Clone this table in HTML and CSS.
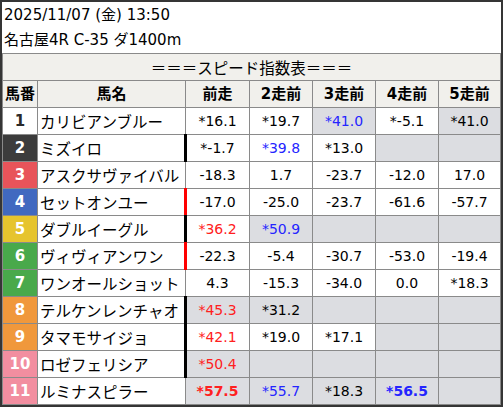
FILE: index.html
```html
<!DOCTYPE html>
<html lang="ja">
<head>
<meta charset="utf-8">
<title>スピード指数表</title>
<link rel="stylesheet" href="styles.css">
</head>
<body>
<div class="frame">
  <div class="info">
    <div>2025/11/07 (金) 13:50</div>
    <div>名古屋4R C-35 ダ1400m</div>
  </div>
  <div class="sheet" role="table">
    <div class="title">＝＝＝スピード指数表＝＝＝</div>
    <div class="row" role="row">
      <div class="c h">馬番</div><div class="c h">馬名</div><div class="c h">前走</div><div class="c h">2走前</div><div class="c h">3走前</div><div class="c h">4走前</div><div class="c h">5走前</div>
    </div>
    <div class="row" role="row">
      <div class="c num f1">1</div><div class="c name">カリビアンブルー</div>
      <div class="c">*16.1</div><div class="c">*19.7</div><div class="c g b">*41.0</div><div class="c">*-5.1</div><div class="c g">*41.0</div>
    </div>
    <div class="row" role="row">
      <div class="c num f2">2</div><div class="c name">ミズイロ</div>
      <div class="c lb">*-1.7</div><div class="c b">*39.8</div><div class="c">*13.0</div><div class="c g"></div><div class="c g"></div>
    </div>
    <div class="row" role="row">
      <div class="c num f3">3</div><div class="c name">アスクサヴァイバル</div>
      <div class="c">-18.3</div><div class="c">1.7</div><div class="c">-23.7</div><div class="c">-12.0</div><div class="c">17.0</div>
    </div>
    <div class="row" role="row">
      <div class="c num f4">4</div><div class="c name">セットオンユー</div>
      <div class="c lr">-17.0</div><div class="c">-25.0</div><div class="c">-23.7</div><div class="c">-61.6</div><div class="c">-57.7</div>
    </div>
    <div class="row" role="row">
      <div class="c num f5">5</div><div class="c name">ダブルイーグル</div>
      <div class="c lb r">*36.2</div><div class="c g b">*50.9</div><div class="c g"></div><div class="c g"></div><div class="c g"></div>
    </div>
    <div class="row" role="row">
      <div class="c num f6">6</div><div class="c name">ヴィヴィアンワン</div>
      <div class="c lr">-22.3</div><div class="c">-5.4</div><div class="c">-30.7</div><div class="c">-53.0</div><div class="c">-19.4</div>
    </div>
    <div class="row" role="row">
      <div class="c num f6">7</div><div class="c name">ワンオールショット</div>
      <div class="c">4.3</div><div class="c">-15.3</div><div class="c">-34.0</div><div class="c">0.0</div><div class="c">*18.3</div>
    </div>
    <div class="row" role="row">
      <div class="c num f8">8</div><div class="c name">テルケンレンチャオ</div>
      <div class="c lb g r">*45.3</div><div class="c g">*31.2</div><div class="c g"></div><div class="c g"></div><div class="c g"></div>
    </div>
    <div class="row" role="row">
      <div class="c num f8">9</div><div class="c name">タマモサイジョ</div>
      <div class="c lb r">*42.1</div><div class="c">*19.0</div><div class="c">*17.1</div><div class="c g"></div><div class="c g"></div>
    </div>
    <div class="row" role="row">
      <div class="c num f10">10</div><div class="c name">ロゼフェリシア</div>
      <div class="c lb g r">*50.4</div><div class="c g"></div><div class="c g"></div><div class="c g"></div><div class="c g"></div>
    </div>
    <div class="row" role="row">
      <div class="c num f10">11</div><div class="c name">ルミナスピラー</div>
      <div class="c g r bold">*57.5</div><div class="c g b">*55.7</div><div class="c g">*18.3</div><div class="c g b bold">*56.5</div><div class="c g"></div>
    </div>
  </div>
</div>
</body>
</html>
```

FILE: styles.css
```css
* { box-sizing: border-box; margin: 0; padding: 0; }
html, body { width: 503px; height: 407px; overflow: hidden; }
body {
  font-family: "DejaVu Sans", "Noto Sans CJK JP", sans-serif;
  font-size: 14px;
  color: #000;
  background: #fff;
}
.frame {
  width: 503px;
  height: 407px;
  border: 2px solid #353535;
  display: flex;
  flex-direction: column;
}
.info {
  height: 51px;
  padding: 1px 0 0 2px;
  line-height: 25px;
  font-size: 15px;
}
.sheet {
  display: grid;
  grid-template-columns: 34px 147px 63px 62px 62px 62px 61px;
  grid-auto-rows: 26px;
  gap: 1px;
  padding: 1px;
  background: #8a8a8a;
}
.row { display: contents; }
.title {
  grid-column: 1 / -1;
  background: #f1f0ec;
  text-align: center;
  font-family: "Noto Sans CJK JP", sans-serif;
  font-size: 15.5px;
  line-height: 26px;
}
.c {
  position: relative;
  background: #fff;
  line-height: 26px;
  text-align: center;
  white-space: nowrap;
}
.h {
  background: #f1f0ec;
  font-weight: bold;
  font-size: 15px;
}
.name {
  text-align: left;
  padding-left: 2px;
  font-family: "Noto Sans CJK JP", sans-serif;
  font-size: 15.5px;
}
.num { font-weight: bold; color: #fff; font-size: 15px; }
.f1 { background: #fff; color: #2a2a2a; }
.f2 { background: #3c3c3c; }
.f3 { background: #e8545a; }
.f4 { background: #4169c0; }
.f5 { background: #e6c42e; }
.f6 { background: #49a94b; }
.f8 { background: #f0983c; }
.f10 { background: #f28ea0; }
.g { background: #dcdde1; }
.r { color: #ff2020; }
.b { color: #2525ff; }
.bold { font-weight: bold; }
.lb::before, .lr::before {
  content: "";
  position: absolute;
  left: -2px;
  top: -1px;
  bottom: -1px;
  width: 3px;
  background: #000;
}
.lr::before { background: #ff0000; }
```
